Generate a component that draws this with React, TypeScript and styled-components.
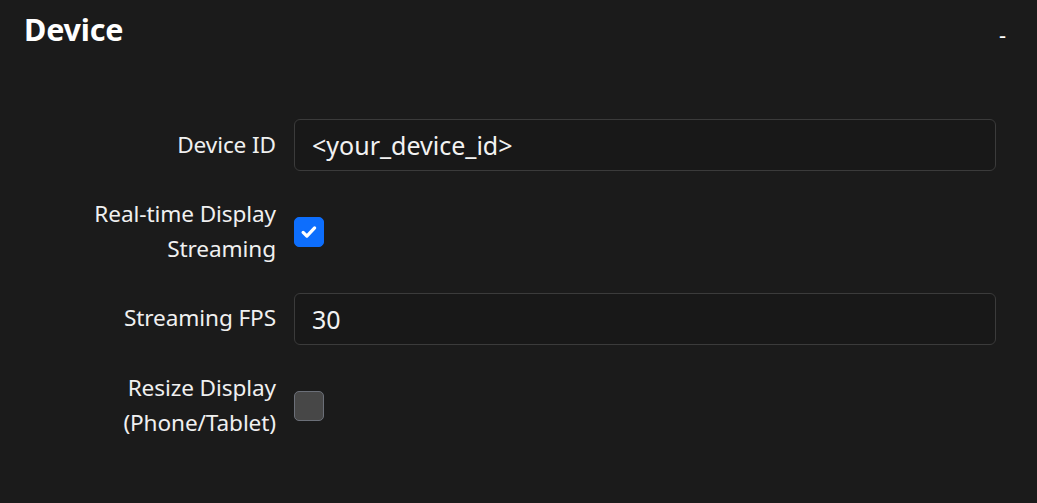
import React from "react";
import styled, { createGlobalStyle } from "styled-components";

const Global = createGlobalStyle`
  html, body { margin: 0; padding: 0; background: #1b1b1b; }
  body { font-family: "Noto Sans", "Open Sans", sans-serif; color: #f2f2f2; }
  * { box-sizing: border-box; }
`;

const Page = styled.div`
  width: 1037px;
  height: 503px;
  background: #1b1b1b;
  padding: 7px 32px 0 24px;
`;

const Header = styled.div`
  display: flex;
  align-items: center;
  justify-content: space-between;
  height: 44px;
`;

const Title = styled.h2`
  margin: 0;
  font-size: 30.5px;
  font-weight: 700;
  letter-spacing: -0.2px;
  color: #ffffff;
`;

const Collapse = styled.span`
  font-size: 22px;
  color: #ffffff;
  padding-top: 10px;
  margin-right: -1px;
`;

const Form = styled.div`
  display: grid;
  grid-template-columns: 252px 1fr;
  column-gap: 18px;
  row-gap: 26.3px;
  align-items: center;
  margin-top: 68px;
  padding-right: 9px;
`;

const Label = styled.label`
  text-align: right;
  font-size: 22.6px;
  line-height: 34.6px;
  letter-spacing: -0.1px;
  color: #f0f0f0;
`;

const Input = styled.input`
  height: 52px;
  width: 100%;
  background: #181818;
  border: 1px solid #3b3b3b;
  border-radius: 6px;
  padding: 0 17px;
  font-family: inherit;
  font-size: 25px;
  color: #f2f2f2;
  outline: none;
`;

const Box = styled.div<{ $checked?: boolean }>`
  width: 30px;
  height: 30px;
  border-radius: 5px;
  display: flex;
  align-items: center;
  justify-content: center;
  background: ${(p) => (p.$checked ? "#0d6efd" : "#474747")};
  border: 1px solid ${(p) => (p.$checked ? "#0d6efd" : "#6b6f78")};
`;

const Check = () => (
  <svg width="20" height="20" viewBox="0 0 16 16" fill="none">
    <path d="M3.3 8.3l3 3 6.2-6.6" stroke="#fff" strokeWidth="2.6" strokeLinecap="round" strokeLinejoin="round" />
  </svg>
);

export default function App() {
  return (
    <Page>
      <Global />
      <Header>
        <Title>Device</Title>
        <Collapse>-</Collapse>
      </Header>
      <Form>
        <Label>Device ID</Label>
        <Input defaultValue="<your_device_id>" />
        <Label>
          Real-time Display
          <br />
          Streaming
        </Label>
        <Box $checked>
          <Check />
        </Box>
        <Label>Streaming FPS</Label>
        <Input defaultValue="30" />
        <Label>
          Resize Display
          <br />
          (Phone/Tablet)
        </Label>
        <Box />
      </Form>
    </Page>
  );
}
